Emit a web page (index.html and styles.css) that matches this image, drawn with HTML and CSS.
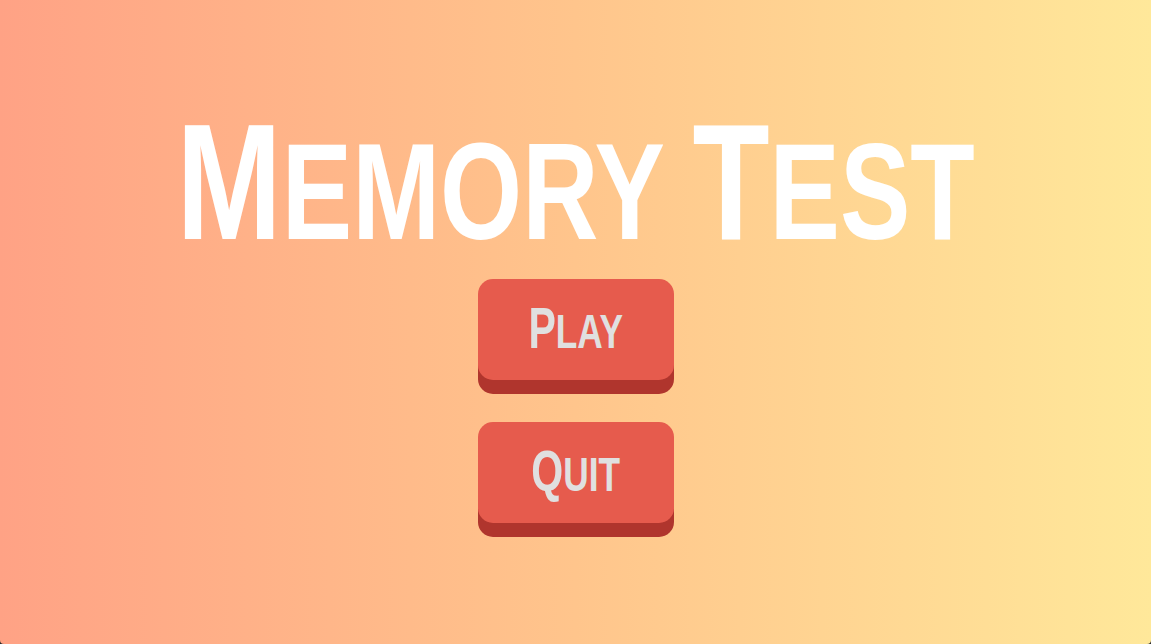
FILE: index.html
```html
<!DOCTYPE html>
<html lang="en">
<head>
    <meta charset="UTF-8">
    <meta name="viewport" content="width=device-width, initial-scale=1.0">
    <title>Memory Test</title>
    <link rel="stylesheet" href="styles.css">
</head>
<body>
    <div class="menu">
        <h1 class="title"><span class="cap">M</span>emory <span class="cap">T</span>est</h1>
        <button class="btn" onclick="startGame()"><span class="label"><span class="cap">P</span>lay</span></button>
        <button class="btn" onclick="quitGame()"><span class="label"><span class="cap">Q</span>uit</span></button>
    </div>

    <script>
        function startGame() {
            console.log('play');
        }

        function quitGame() {
            console.log('quit');
        }
    </script>
</body>
</html>
```

FILE: styles.css
```css
html {
    background: #2a2a2a;
}
body {
    margin: 0;
    height: 100vh;
    font-family: "Liberation Sans", Arial, sans-serif;
    background: linear-gradient(to right, #ffa285, #ffc58c 50%, #ffe89a);
    border-radius: 0 0 4px 4px;
}
.menu {
    display: flex;
    flex-direction: column;
    align-items: center;
    padding-top: 103px;
}
.title {
    margin: 0 0 9px;
    color: #fff;
    font-size: 138px;
    font-weight: bold;
    line-height: 158px;
    text-transform: uppercase;
    transform: scaleX(0.765);
}
.title .cap {
    font-size: 165px;
}
.btn {
    display: flex;
    justify-content: center;
    align-items: center;
    width: 196px;
    height: 101px;
    margin-bottom: 42px;
    padding: 0 0 3px;
    border: none;
    border-radius: 15px;
    background-color: #e65b4d;
    box-shadow: 0 14px 0 #b0352d;
    cursor: pointer;
    font-family: inherit;
}
.label {
    display: inline-block;
    color: #e0e0e0;
    font-size: 49px;
    font-weight: bold;
    text-transform: uppercase;
    transform: scaleX(0.72);
}
.label .cap {
    font-size: 57px;
}
```
